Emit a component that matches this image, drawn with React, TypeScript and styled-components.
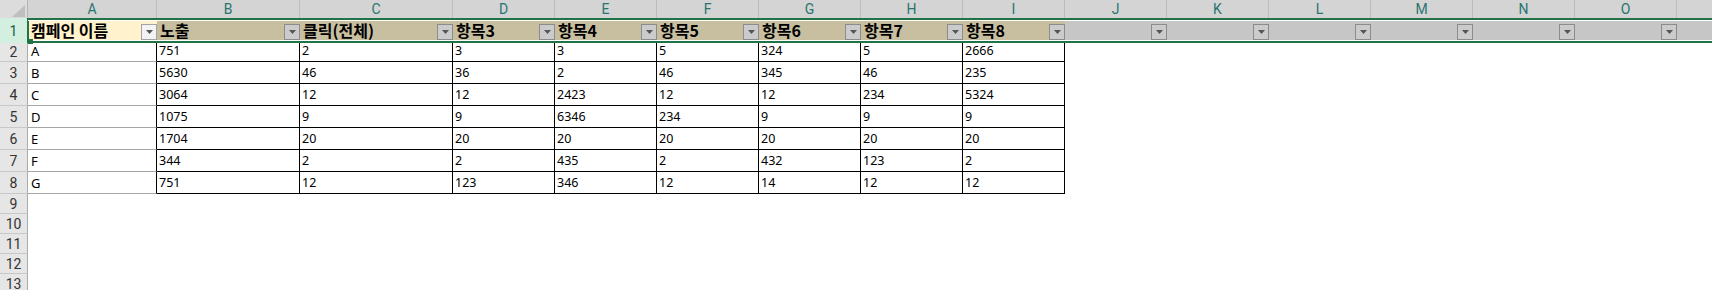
import React from "react";
import styled, { createGlobalStyle, css } from "styled-components";

const GREEN = "#217346";

const GlobalStyle = createGlobalStyle`
  html, body { margin: 0; padding: 0; background: #ffffff; }
  body { width: 1712px; height: 290px; overflow: hidden; }
`;

type Col = { key: string; label: string; w: number };
const COLS: Col[] = [
  { key: "A", label: "A", w: 129 },
  { key: "B", label: "B", w: 143 },
  { key: "C", label: "C", w: 153 },
  ...["D", "E", "F", "G", "H", "I", "J", "K", "L", "M", "N", "O"].map((k) => ({ key: k, label: k, w: 102 })),
  { key: "P", label: "", w: 102 },
];

const HEADERS = ["캠페인 이름", "노출", "클릭(전체)", "항목3", "항목4", "항목5", "항목6", "항목7", "항목8"];

const DATA: [string, number[]][] = [
  ["A", [751, 2, 3, 3, 5, 324, 5, 2666]],
  ["B", [5630, 46, 36, 2, 46, 345, 46, 235]],
  ["C", [3064, 12, 12, 2423, 12, 12, 234, 5324]],
  ["D", [1075, 9, 9, 6346, 234, 9, 9, 9]],
  ["E", [1704, 20, 20, 20, 20, 20, 20, 20]],
  ["F", [344, 2, 2, 435, 2, 432, 123, 2]],
  ["G", [751, 12, 123, 346, 12, 14, 12, 12]],
];

const Sheet = styled.div`
  width: 1712px;
  height: 290px;
  overflow: hidden;
  display: flex;
  flex-direction: column;
  background: #ffffff;
  font-family: "Noto Sans", "Liberation Sans", sans-serif;
`;

const ColHeaderRow = styled.div`
  display: flex;
  flex: none;
  height: 18px;
  background: #d4d4d4;
`;

const Corner = styled.div`
  width: 28px;
  flex: none;
  box-sizing: border-box;
  border-right: 1px solid #b4b4b4;
  background: #dcdcdc;
  display: flex;
  align-items: flex-end;
  justify-content: flex-end;
  padding: 0 2px 1px 0;
`;

const ColHeader = styled.div<{ $w: number }>`
  width: ${(p) => p.$w}px;
  flex: none;
  box-sizing: border-box;
  border-right: 1px solid #bcbcbc;
  display: flex;
  align-items: center;
  justify-content: center;
  font-family: Roboto, "Noto Sans", sans-serif;
  font-size: 14px;
  line-height: 17px;
  color: #287470;
`;

const Row = styled.div<{ $h: number }>`
  display: flex;
  flex: none;
  height: ${(p) => p.$h}px;
`;

const RowHeader = styled.div<{ $active?: boolean }>`
  width: 28px;
  flex: none;
  box-sizing: border-box;
  height: 100%;
  border-right: 1px solid #ababab;
  border-bottom: 1px solid #c8c8c8;
  background: #e6e6e6;
  display: flex;
  align-items: center;
  justify-content: center;
  font-family: Roboto, "Noto Sans", sans-serif;
  font-size: 14px;
  color: #333333;
  ${(p) =>
    p.$active &&
    css`
      background: #d3efdf;
      color: #1d5c40;
      border-right: 1px solid ${GREEN};
      border-bottom: none;
    `}
`;

const Band = styled.div`
  flex: 1;
  display: flex;
  box-sizing: border-box;
  height: 25px;
  border-top: 2px solid ${GREEN};
  border-bottom: 2px solid ${GREEN};
  padding: 1px 0;
  background: #ffffff;
`;

type Tone = "active" | "tan" | "gray";
const TONE_BG: Record<Tone, string> = {
  active: "#fff2cc",
  tan: "#c8bfa0",
  gray: "#c6c6c6",
};

const HeadCell = styled.div<{ $w: number; $tone: Tone }>`
  position: relative;
  width: ${(p) => p.$w}px;
  flex: none;
  box-sizing: border-box;
  height: 19px;
  display: flex;
  align-items: center;
  justify-content: space-between;
  padding-left: 3px;
  background: ${(p) => TONE_BG[p.$tone]};
  ${(p) =>
    p.$tone === "active" &&
    css`
      box-shadow: inset 1px 0 0 ${GREEN};
    `}
`;

const HeadLabel = styled.span`
  font-family: "Noto Sans CJK KR", "Noto Sans", sans-serif;
  font-weight: 700;
  font-size: 16px;
  line-height: 19px;
  color: #000000;
  white-space: nowrap;
`;

const FillHandle = styled.span`
  position: absolute;
  left: 0;
  bottom: -4px;
  width: 5px;
  height: 5px;
  background: ${GREEN};
`;

const FilterButton = styled.span<{ $active?: boolean }>`
  align-self: flex-end;
  flex: none;
  width: 16px;
  height: 16px;
  box-sizing: border-box;
  border: 1px solid ${(p) => (p.$active ? "#a3a3a3" : "#8c8c8c")};
  background: ${(p) => (p.$active ? "#f3f3f3" : "#cbcbcb")};
  display: flex;
  align-items: center;
  justify-content: center;
`;

type Kind = "label" | "data" | "empty";

const Cell = styled.div<{ $w: number; $kind: Kind }>`
  width: ${(p) => p.$w}px;
  flex: none;
  box-sizing: border-box;
  height: 100%;
  display: flex;
  align-items: flex-end;
  padding: 0 2px 2px 2px;
  font-family: "Noto Sans", "Liberation Sans", sans-serif;
  font-size: 12.5px;
  line-height: 16px;
  color: #000000;
  white-space: nowrap;
  overflow: hidden;
  ${(p) =>
    p.$kind === "label" &&
    css`
      padding-left: 3px;
      font-size: 13px;
      border-right: 1px solid #000000;
      border-bottom: 1px solid #a6a6a6;
    `}
  ${(p) =>
    p.$kind === "data" &&
    css`
      border-right: 1px solid #000000;
      border-bottom: 1px solid #000000;
    `}
`;

const Caret = () => (
  <svg width="7" height="4" viewBox="0 0 7 4">
    <polygon points="0,0 7,0 3.5,4" fill="#555555" />
  </svg>
);

const CornerMark = () => (
  <svg width="13" height="12" viewBox="0 0 13 12">
    <polygon points="13,0 13,12 0,12" fill="#bfbfbf" />
  </svg>
);

export default function App() {
  return (
    <>
      <GlobalStyle />
      <Sheet>
        <ColHeaderRow>
          <Corner>
            <CornerMark />
          </Corner>
          {COLS.map((c) => (
            <ColHeader key={c.key} $w={c.w}>
              {c.label}
            </ColHeader>
          ))}
        </ColHeaderRow>

        <Row $h={25}>
          <RowHeader $active>1</RowHeader>
          <Band>
            {COLS.map((c, i) => {
              const tone: Tone = i === 0 ? "active" : i < HEADERS.length ? "tan" : "gray";
              return (
                <HeadCell key={c.key} $w={c.w} $tone={tone}>
                  <HeadLabel>{HEADERS[i] ?? ""}</HeadLabel>
                  <FilterButton $active={i === 0}>
                    <Caret />
                  </FilterButton>
                  {i === 0 && <FillHandle />}
                </HeadCell>
              );
            })}
          </Band>
        </Row>

        {DATA.map(([label, values], r) => (
          <Row key={label} $h={r === 0 ? 19 : 22}>
            <RowHeader>{r + 2}</RowHeader>
            {COLS.map((c, i) => {
              if (i === 0)
                return (
                  <Cell key={c.key} $w={c.w} $kind="label">
                    {label}
                  </Cell>
                );
              if (i <= values.length)
                return (
                  <Cell key={c.key} $w={c.w} $kind="data">
                    {values[i - 1]}
                  </Cell>
                );
              return <Cell key={c.key} $w={c.w} $kind="empty" />;
            })}
          </Row>
        ))}

        {[9, 10, 11, 12, 13].map((n) => (
          <Row key={n} $h={20}>
            <RowHeader>{n}</RowHeader>
          </Row>
        ))}
      </Sheet>
    </>
  );
}
